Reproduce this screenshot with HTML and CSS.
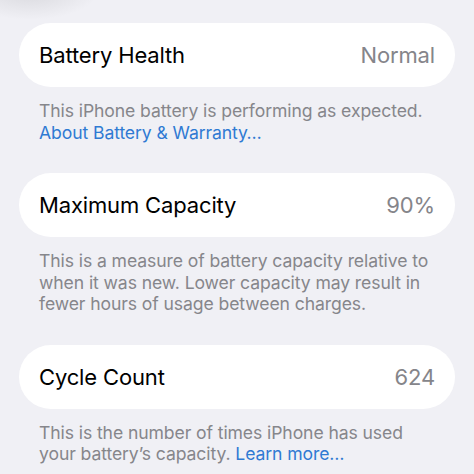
FILE: index.html
```html
<!DOCTYPE html>
<html>
<head>
<meta charset="utf-8">
<link rel="stylesheet" href="styles.css">
</head>
<body>
<div class="blob"></div>
<main class="page">
  <section class="group">
    <div class="card"><span class="label">Battery Health</span><span class="value">Normal</span></div>
    <p class="footer">This iPhone battery is performing as expected. <a class="link">About Battery &amp; Warranty…</a></p>
  </section>
  <section class="group">
    <div class="card"><span class="label">Maximum Capacity</span><span class="value">90%</span></div>
    <p class="footer">This is a measure of battery capacity relative to when it was new. Lower capacity may result in fewer hours of usage between charges.</p>
  </section>
  <section class="group">
    <div class="card"><span class="label">Cycle Count</span><span class="value">624</span></div>
    <p class="footer">This is the number of times iPhone has used your battery’s capacity. <a class="link">Learn more…</a></p>
  </section>
</main>
</body>
</html>
```
FILE: styles.css
```css
html, body {
  margin: 0;
  padding: 0;
  background: #f0f0f5;
  font-family: Inter, "Liberation Sans", sans-serif;
  overflow: hidden;
}
.blob {
  position: absolute;
  left: -40px;
  top: -40px;
  width: 140px;
  height: 60px;
  border-radius: 50%;
  background: radial-gradient(ellipse at center, rgba(200,200,205,0.6), rgba(240,240,245,0) 70%);
}
.page {
  position: relative;
  padding: 23px 19px 0 19px;
  display: flex;
  flex-direction: column;
}
.group { margin-bottom: 30px; }
.card {
  background: #fff;
  border-radius: 32px;
  height: 64px;
  padding: 0 20px;
  display: flex;
  align-items: center;
  justify-content: space-between;
}
.label {
  font-size: 22px;
  color: #000;
  letter-spacing: -0.15px;
}
.value {
  font-size: 22px;
  color: #85858a;
  letter-spacing: -0.15px;
}
.footer {
  margin: 13px 0 0 0;
  padding: 0 20px;
  font-size: 17.6px;
  line-height: 21.5px;
  color: #86868b;
  letter-spacing: -0.1px;
}
.link {
  color: #2f7ad3;
}
```
